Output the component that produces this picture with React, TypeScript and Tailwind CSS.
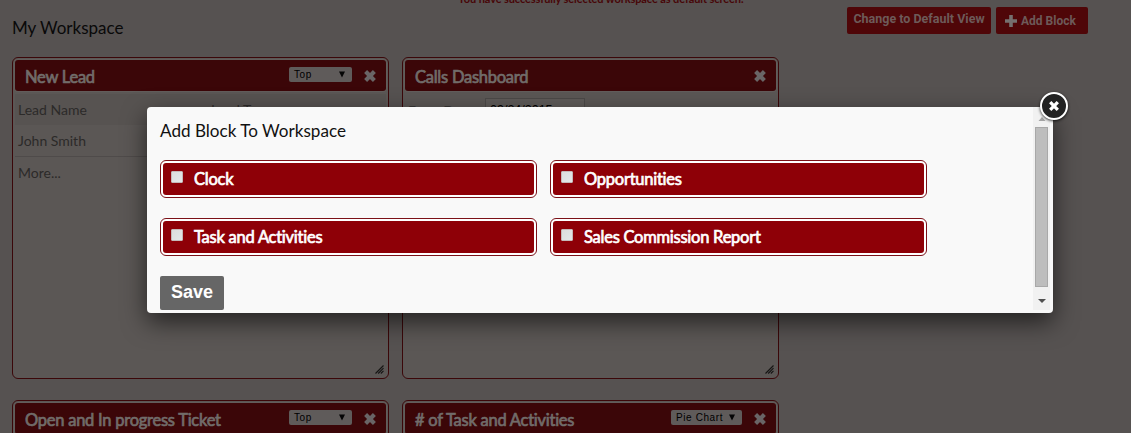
import React from 'react';

const TITLE = 'font-normal tracking-[-0.25px] [-webkit-text-stroke:0.7px_currentColor]';

function Cross() {
  return (
    <svg width="14" height="14" viewBox="0 0 14 14" className="shrink-0">
      <path d="M2.6 2.6 L11.4 11.4 M11.4 2.6 L2.6 11.4" stroke="#696566" strokeWidth="4.2" fill="none" />
    </svg>
  );
}

function Picker({ label, width }: { label: string; width: string }) {
  return (
    <div className={`mr-[11px] mb-[2px] flex h-[15px] items-center justify-between rounded-xs bg-[#5f5b5a] pr-[6px] pl-[5px] font-['Liberation_Sans',sans-serif] text-[10px] tracking-[0.6px] text-black ${width}`}>
      <span>{label}</span>
      <svg width="8" height="7" viewBox="0 0 8 7"><path d="M1 0.5H7L4 6.5Z" fill="#050505" /></svg>
    </div>
  );
}

function Grip() {
  return (
    <svg width="9" height="9" viewBox="0 0 9 9" className="absolute right-1 bottom-1">
      <path d="M0.5 8.5L8.5 0.5M3.2 8.5L8.5 3.2M5.8 8.5L8.5 5.8" stroke="#161514" strokeWidth="1.1" />
    </svg>
  );
}

type BlockProps = { title: string; picker?: string; pickerWidth?: string; children?: React.ReactNode };

function Block({ title, picker, pickerWidth = '', children }: BlockProps) {
  return (
    <section className="relative h-[322px] w-[377px] shrink-0 rounded-md border border-[#3b0709] bg-[#5b5755] p-0.5">
      <header className="flex h-[31px] items-center rounded-[3px] bg-[#3b0608] pr-[9px] pl-[10px] shadow-[0_0_0_1px_#625d5b]">
        <h2 className={`mt-0.5 flex-1 text-[16.5px] leading-5 text-[#716c6a] ${TITLE}`}>{title}</h2>
        {picker && <Picker label={picker} width={pickerWidth} />}
        <Cross />
      </header>
      {children}
      <Grip />
    </section>
  );
}

function Choice({ title }: { title: string }) {
  return (
    <label className="block h-[38px] w-[377px] shrink-0 rounded-md border border-[#7c1118] bg-white p-0.5">
      <span className="flex h-8 rounded-[3px] bg-[#8e0007] pl-2">
        <input type="checkbox" className="mt-[8px] size-3 shrink-0 appearance-none rounded-[1px] border border-[#c5b9b9] bg-linear-to-br from-[#dcdcdc] to-[#e4e8ea]" />
        <span className={`mt-[6px] ml-[11px] text-[16.5px] leading-5 text-white ${TITLE}`}>{title}</span>
      </span>
    </label>
  );
}

export default function App() {
  return (
    <div className="relative h-[433px] w-[1131px] overflow-hidden bg-[#565251] font-['Lato',sans-serif]">
      <p className="absolute top-[-9px] left-[458px] text-[11px] leading-4 font-bold tracking-[-0.1px] whitespace-nowrap text-[#480608]">You have successfully selected workspace as default screen.</p>
      <div className="flex h-[57px] items-start pl-3">
        <h1 className="mt-[17px] w-[835px] text-[17px] leading-[22px] text-[#090909]">My Workspace</h1>
        <div className="mt-[7px] flex gap-[5px] font-['Roboto',sans-serif] text-xs font-bold text-[#6d5a59]">
          <button className="h-[27px] w-36 rounded-xs bg-[#4f0608] pb-0.5 text-[12.5px] whitespace-nowrap">Change to Default View</button>
          <button className="flex h-[27px] w-[92px] items-center rounded-xs bg-[#4f0608] pl-[9px] whitespace-nowrap">
            <svg width="12" height="12" viewBox="0 0 12 12" className="mr-1"><path d="M6 0V12M0 6H12" stroke="#75706f" strokeWidth="3.6" /></svg>
            Add Block
          </button>
        </div>
      </div>
      <main className="flex flex-col gap-[21px] pl-3">
        <div className="flex gap-[13px]">
          <Block title="New Lead" picker="Top" pickerWidth="w-[63px]">
            <div className="px-[3px] pt-[3px] text-sm text-[#2c2a29]">
              <div className="-mx-[3px] flex h-[31px] items-center bg-[#575351] px-[3px]"><span className="w-[193px]">Lead Name</span><span>Lead Type</span></div>
              <div className="-mx-[3px] flex h-8 items-center border-b border-[#4f4b4a] px-[3px]">John Smith</div>
              <div className="flex h-8 items-center">More...</div>
            </div>
          </Block>
          <Block title="Calls Dashboard">
            <div className="flex items-start pt-[7px] pl-[3px] text-sm text-[#393635]">
              <span className="w-[77px] pt-[3px]">From Date</span>
              <span className="h-6 w-[100px] border border-[#4c4948] bg-[#5f5b59] px-1 pt-[3px] font-['Liberation_Sans',sans-serif] text-[12.5px] text-black">09/24/2015</span>
            </div>
          </Block>
        </div>
        <div className="flex gap-[13px]">
          <Block title="Open and In progress Ticket" picker="Top" pickerWidth="w-[63px]" />
          <Block title="# of Task and Activities" picker="Pie Chart" pickerWidth="w-[71px]" />
        </div>
      </main>
      <div role="dialog" className="absolute top-[107px] left-[147px] flex h-[206px] w-[906px] rounded bg-[#f9f9f9] shadow-[0_9px_24px_rgba(0,0,0,0.6)]">
        <div className="flex-1 pl-[13px]">
          <h2 className="mt-[13px] text-[17.1px] leading-[22px] text-[#111]">Add Block To Workspace</h2>
          <div className="mt-[18px] grid grid-cols-[377px_377px] gap-x-[13px] gap-y-5">
            <Choice title="Clock" />
            <Choice title="Opportunities" />
            <Choice title="Task and Activities" />
            <Choice title="Sales Commission Report" />
          </div>
          <button className="mt-5 block h-[34px] w-16 rounded-xs bg-[#666] pb-0.5 font-['Liberation_Sans',sans-serif] text-lg leading-7 font-bold text-white">Save</button>
        </div>
        <div className="mr-[3px] flex h-[203px] w-[17px] flex-col items-center bg-[#f1f1f1]">
          <svg width="8" height="20" viewBox="0 0 8 20"><path d="M0.5 14L4 10L7.5 14Z" fill="#a3a3a3" /></svg>
          <div className="h-40 w-[13px] border border-[#a8a8a8] bg-[#bdbdbd]" />
          <svg width="8" height="20" viewBox="0 0 8 20"><path d="M0 12H8L4 16Z" fill="#505050" /></svg>
        </div>
        <button aria-label="Close" className="absolute top-[-15px] left-[893px] flex size-7 items-center justify-center rounded-full border-2 border-white bg-[#222] shadow-[0_1px_3px_rgba(0,0,0,0.8)]">
          <svg width="12" height="12" viewBox="0 0 12 12"><path d="M2.2 2.2L9.8 9.8M9.8 2.2L2.2 9.8" stroke="white" strokeWidth="3.3" /></svg>
        </button>
      </div>
    </div>
  );
}
